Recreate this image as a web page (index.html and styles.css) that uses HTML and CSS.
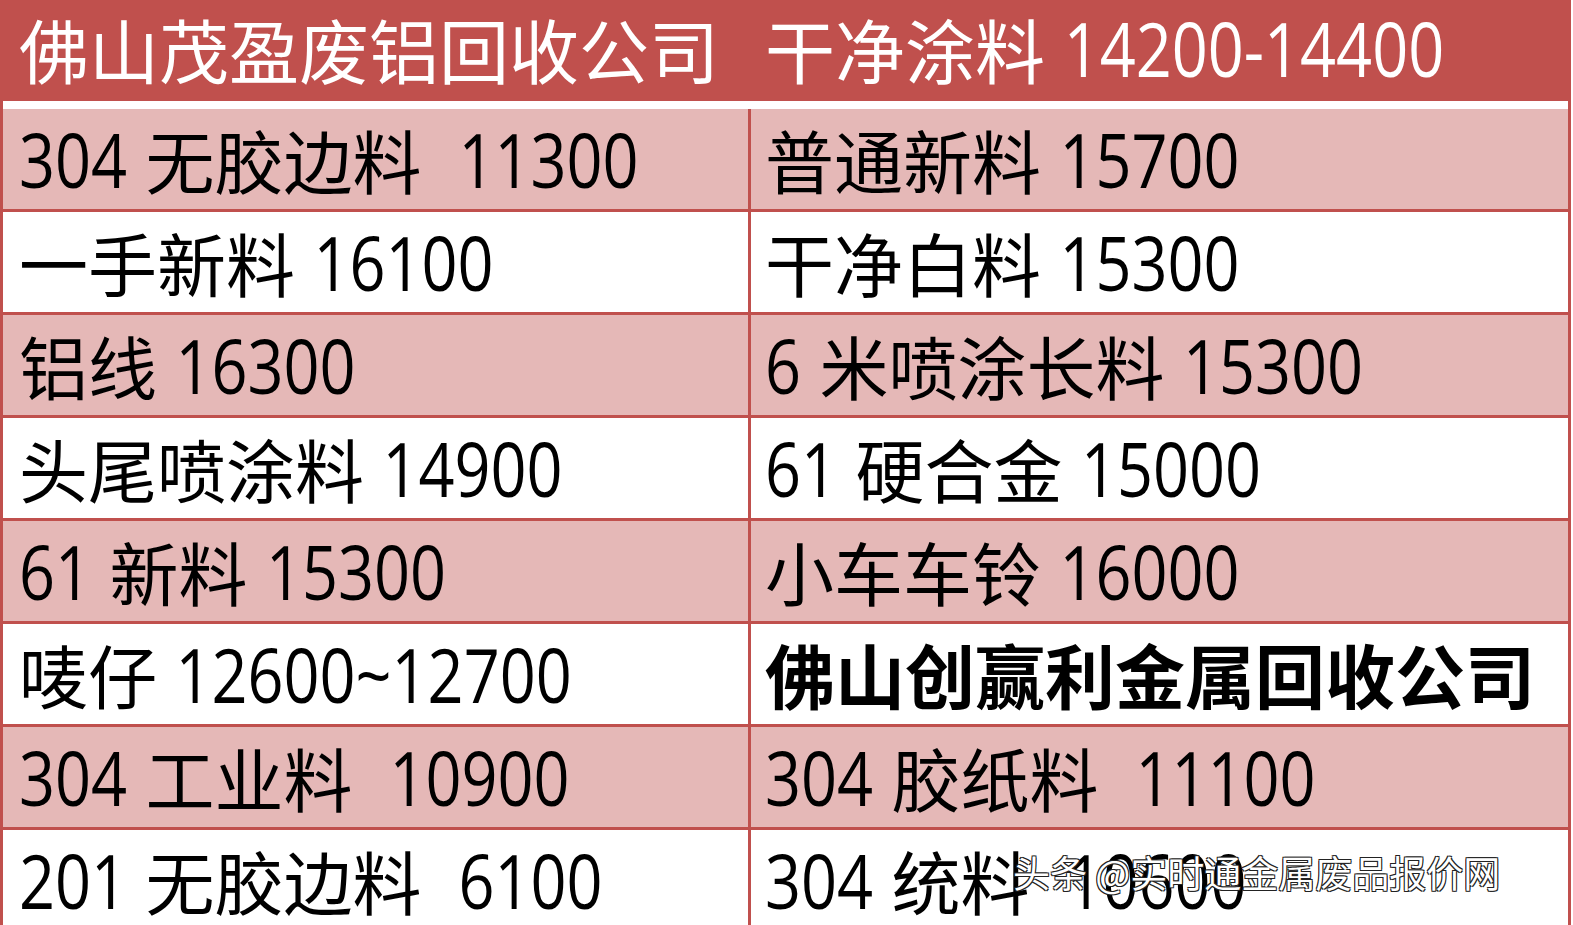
FILE: index.html
```html
<!DOCTYPE html>
<html lang="zh-CN">
<head>
<meta charset="utf-8">
<title>佛山废铝回收报价</title>
<link rel="stylesheet" href="styles.css">
</head>
<body>
<div class="sheet">
  <div class="row head">
    <div class="cell">佛山茂盈废铝回收公司</div>
    <div class="cell">干净涂料 <span class="n">14200-14400</span></div>
  </div>
  <div class="spacer"></div>
  <div class="row pink">
    <div class="cell"><span class="n">304</span> 无胶边料  <span class="n">11300</span></div>
    <div class="cell">普通新料 <span class="n">15700</span></div>
  </div>
  <div class="row">
    <div class="cell">一手新料 <span class="n">16100</span></div>
    <div class="cell">干净白料 <span class="n">15300</span></div>
  </div>
  <div class="row pink">
    <div class="cell">铝线 <span class="n">16300</span></div>
    <div class="cell"><span class="n">6</span> 米喷涂长料 <span class="n">15300</span></div>
  </div>
  <div class="row">
    <div class="cell">头尾喷涂料 <span class="n">14900</span></div>
    <div class="cell"><span class="n">61</span> 硬合金 <span class="n">15000</span></div>
  </div>
  <div class="row pink">
    <div class="cell"><span class="n">61</span> 新料 <span class="n">15300</span></div>
    <div class="cell">小车车铃 <span class="n">16000</span></div>
  </div>
  <div class="row">
    <div class="cell">唛仔 <span class="n">12600~12700</span></div>
    <div class="cell bold">佛山创赢利金属回收公司</div>
  </div>
  <div class="row pink">
    <div class="cell"><span class="n">304</span> 工业料  <span class="n">10900</span></div>
    <div class="cell"><span class="n">304</span> 胶纸料  <span class="n">11100</span></div>
  </div>
  <div class="row">
    <div class="cell"><span class="n">201</span> 无胶边料  <span class="n">6100</span></div>
    <div class="cell"><span class="n">304</span> 统料  <span class="n">10600</span></div>
  </div>
  <div class="watermark">头条 @实时通金属废品报价网</div>
</div>
</body>
</html>
```

FILE: styles.css
```css
html, body {
  margin: 0;
  padding: 0;
  background: #ffffff;
}

body {
  width: 1573px;
  height: 925px;
  overflow: hidden;
}

.sheet {
  position: relative;
  width: 1565px;
  border-left: 3px solid #c0504d;
  border-right: 3px solid #c0504d;
  font-family: "Noto Sans CJK SC", sans-serif;
  color: #000;
}

.row {
  display: grid;
  grid-template-columns: 745px 817px;
  column-gap: 3px;
  background: #c0504d;
  border-bottom: 3px solid #c0504d;
}

.cell {
  height: 100px;
  display: flex;
  align-items: center;
  white-space: pre;
  font-size: 69px;
  line-height: 1;
  word-spacing: 3px;
  background: #ffffff;
  padding-left: 16px;
}

.cell + .cell {
  padding-left: 14px;
}

.pink .cell {
  background: #e5b8b7;
}

.head {
  border-bottom: none;
}

.head .cell {
  height: 101px;
  font-size: 70px;
  background: #c0504d;
  color: #ffffff;
  padding-bottom: 4px;
  box-sizing: border-box;
}

.spacer {
  height: 8px;
  background: #ffffff;
}

.n {
  display: inline-block;
  font-family: "Open Sans", sans-serif;
  font-size: 63px;
  line-height: 1;
  transform: scaleY(1.18);
}

.bold {
  font-weight: 600;
  font-size: 70px;
}

.watermark {
  position: absolute;
  left: 1010px;
  top: 854px;
  font-size: 37px;
  line-height: 1;
  color: #ffffff;
  white-space: nowrap;
  text-shadow: 1px 1px 0 #222, -1px -1px 0 #222, 1px -1px 0 #222, -1px 1px 0 #222;
}
```
